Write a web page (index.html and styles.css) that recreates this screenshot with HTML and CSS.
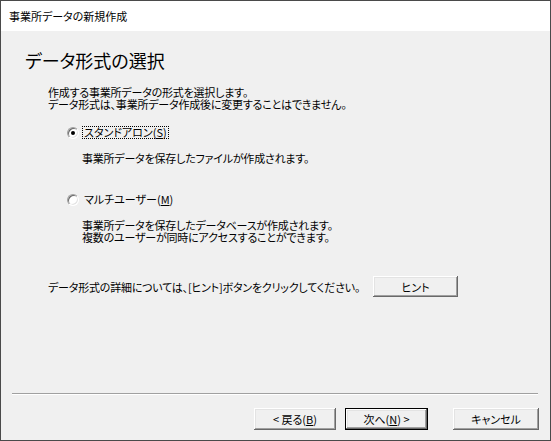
FILE: index.html
```html
<!DOCTYPE html>
<html lang="ja">
  <head>
    <meta charset="UTF-8" />
    <meta name="viewport" content="width=device-width, initial-scale=1.0" />
    <title>事業所データの新規作成</title>
    <link rel="stylesheet" href="styles.css">
  </head>
  <body>
    <div class="window">
      <div class="titlebar">事業所データの新規作成</div>

      <div class="page">
        <h1>データ形式の選択</h1>

        <p class="intro">
          <span class="line">作成する事業所データの形式を選択します。</span>
          <span class="line">データ形式は、事業所データ作成後に変更することはできません。</span>
        </p>

        <div class="option">
          <div class="option-row">
            <span class="radio checked"></span>
            <span class="option-label focused">スタンドアロン(<u>S</u>)</span>
          </div>
          <p class="option-desc">
            <span class="line">事業所データを保存したファイルが作成されます。</span>
          </p>
        </div>

        <div class="option second">
          <div class="option-row">
            <span class="radio"></span>
            <span class="option-label">マルチユーザー(<u>M</u>)</span>
          </div>
          <p class="option-desc">
            <span class="line">事業所データを保存したデータベースが作成されます。</span>
            <span class="line">複数のユーザーが同時にアクセスすることができます。</span>
          </p>
        </div>

        <div class="hint-row">
          <span class="hint-text">データ形式の詳細については、[ヒント]ボタンをクリックしてください。</span>
          <button class="btn hint-btn">ヒント</button>
        </div>

        <div class="spacer"></div>

        <div class="separator"></div>

        <div class="actions">
          <button class="btn back">&lt; 戻る(<u>B</u>)</button>
          <button class="btn next default">次へ(<u>N</u>) &gt;</button>
          <button class="btn cancel">キャンセル</button>
        </div>
      </div>
    </div>
  </body>
</html>
```

FILE: styles.css
```css
html,
body {
  margin: 0;
  background-color: #f0f0f0;
}

body {
  font-family: "Noto Sans CJK JP", "Liberation Sans", sans-serif;
  font-size: 11px;
  font-feature-settings: "palt";
  color: #000;
}

.window {
  width: 551px;
  height: 441px;
  box-sizing: border-box;
  border: 1px solid #4a4a4a;
  display: flex;
  flex-direction: column;
  background-color: #f0f0f0;
}

.titlebar {
  height: 30px;
  padding-left: 8px;
  display: flex;
  align-items: center;
  background-color: #fff;
  line-height: 12px;
}

.page {
  flex: 1;
  display: flex;
  flex-direction: column;
}

h1 {
  margin: 0;
  padding: 17px 0 0 24px;
  font-size: 18px;
  font-weight: normal;
  line-height: 24px;
}

/* each text line is its own block so the 12px pitch stays tight */
.line {
  display: block;
  height: 12px;
  line-height: 12px;
  white-space: nowrap;
  letter-spacing: -0.2px;
}

.intro {
  margin: 14px 0 0 47px;
}

.option {
  margin: 16px 0 0 66px;
}

.option.second {
  margin-top: 29px;
}

.option-row {
  display: flex;
  align-items: center;
  height: 13px;
}

/* classic sunken radio button */
.radio {
  position: relative;
  width: 12px;
  height: 12px;
  box-sizing: border-box;
  border-radius: 50%;
  border: 1px solid;
  border-color: #a0a0a0 #fff #fff #a0a0a0;
  box-shadow: inset 1px 1px 0 #696969, inset -1px -1px 0 #e3e3e3;
  background-color: #fff;
}

.radio.checked::after {
  content: "";
  position: absolute;
  left: 3px;
  top: 3px;
  width: 4px;
  height: 4px;
  border-radius: 50%;
  background-color: #000;
}

.option-label {
  margin-left: 3px;
  padding: 0 1px;
  line-height: 11px;
  border: 1px dotted transparent;
}

.option-label.focused {
  border-color: #000;
}

.option-desc {
  margin: 13px 0 0 15px;
}

.hint-row {
  display: flex;
  align-items: center;
  margin: 33px 0 0 47px;
}

.hint-text {
  width: 325px;
  white-space: nowrap;
  letter-spacing: -0.2px;
}

.btn {
  height: 22px;
  padding: 0;
  font-family: inherit;
  font-size: 11px;
  font-feature-settings: "palt";
  color: #000;
  background-color: #f0f0f0;
  border: none;
  box-shadow: inset -1px -1px 0 #696969, inset 1px 1px 0 #fff,
    inset -2px -2px 0 #a0a0a0, inset 2px 2px 0 #e3e3e3;
}

.btn.default {
  box-shadow: inset 0 0 0 1px #000, inset -2px -2px 0 #696969,
    inset 2px 2px 0 #fff, inset -3px -3px 0 #a0a0a0, inset 3px 3px 0 #e3e3e3;
}

.hint-btn {
  width: 85px;
  height: 21px;
}

.spacer {
  flex: 1;
}

.separator {
  margin: 0 12px 0 11px;
  height: 0;
  border-top: 1px solid #a0a0a0;
  border-bottom: 1px solid #fff;
}

.actions {
  display: flex;
  justify-content: flex-end;
  padding: 13px 11px 10px 0;
}

.back {
  width: 82px;
}

.next {
  width: 83px;
  margin-left: 9px;
}

.cancel {
  width: 86px;
  margin-left: 25px;
}
```
